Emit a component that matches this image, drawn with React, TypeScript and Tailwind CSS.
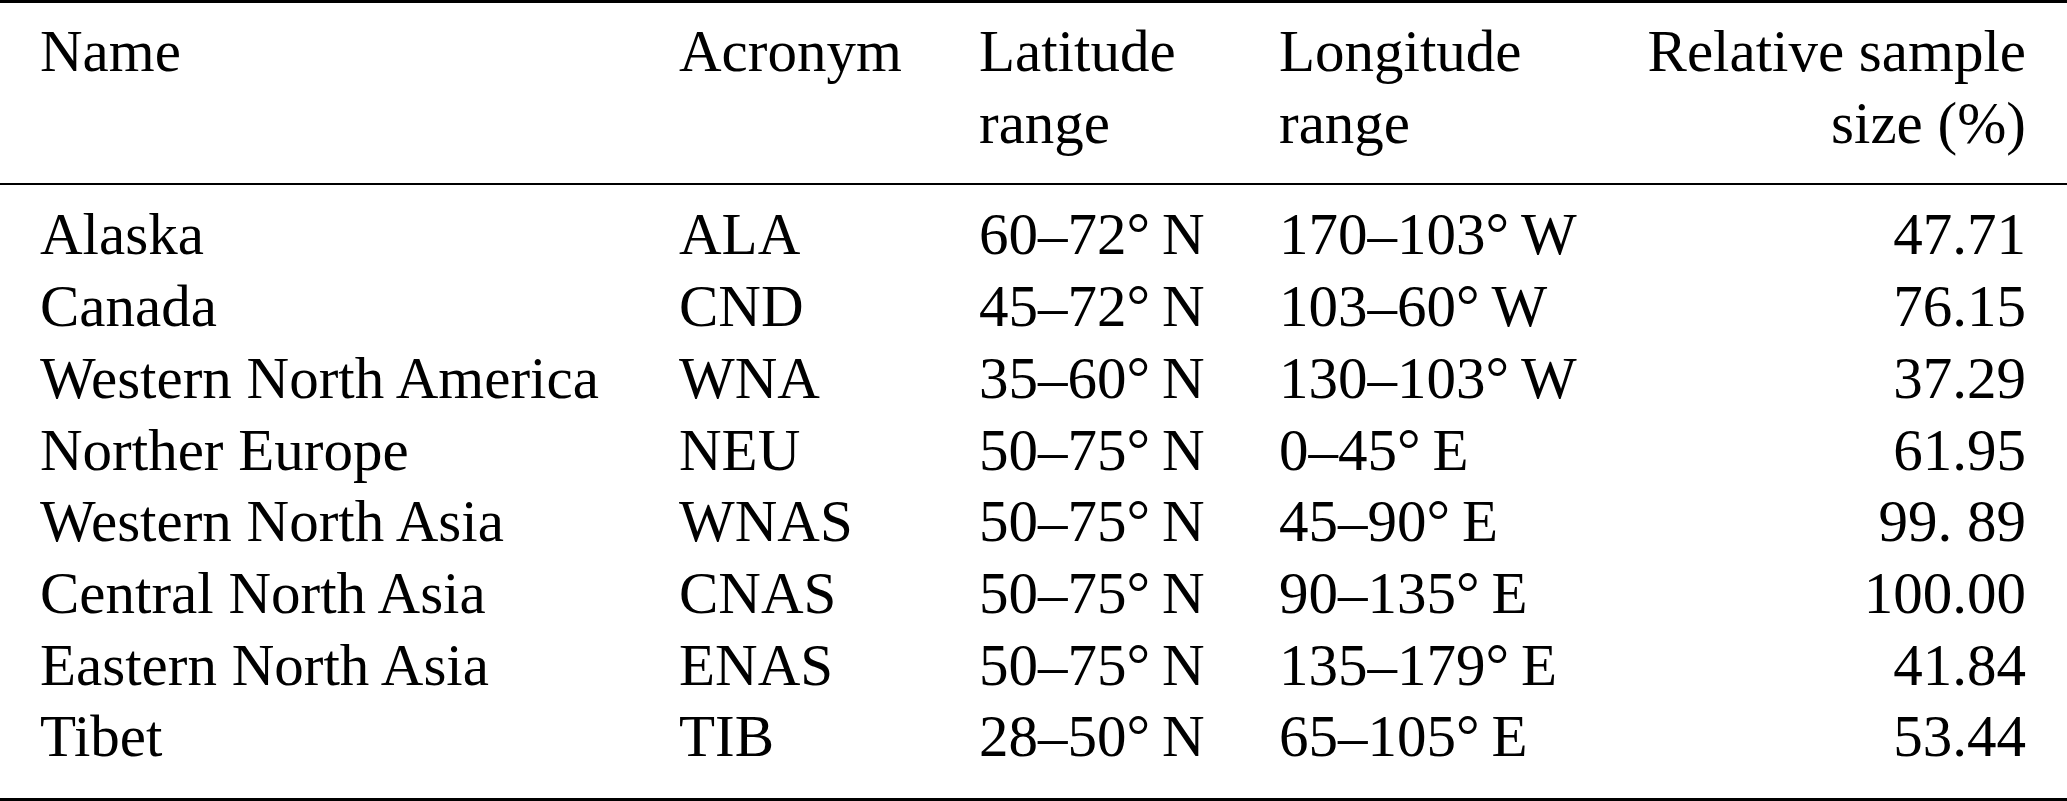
import React from "react";

type Row = [string, string, string, string, string];

const rows: Row[] = [
  ["Alaska", "ALA", "60–72°\u2009N", "170–103°\u2009W", "47.71"],
  ["Canada", "CND", "45–72°\u2009N", "103–60°\u2009W", "76.15"],
  ["Western North America", "WNA", "35–60°\u2009N", "130–103°\u2009W", "37.29"],
  ["Norther Europe", "NEU", "50–75°\u2009N", "0–45°\u2009E", "61.95"],
  ["Western North Asia", "WNAS", "50–75°\u2009N", "45–90°\u2009E", "99. 89"],
  ["Central North Asia", "CNAS", "50–75°\u2009N", "90–135°\u2009E", "100.00"],
  ["Eastern North Asia", "ENAS", "50–75°\u2009N", "135–179°\u2009E", "41.84"],
  ["Tibet", "TIB", "28–50°\u2009N", "65–105°\u2009E", "53.44"],
];

const grid = "grid grid-cols-[639px_300px_300px_1fr_400px] pl-[40px] pr-[41px]";

export default function App() {
  return (
    <div
      className="w-[2067px] h-[801px] bg-white text-black text-[59px] leading-[71.7px] overflow-hidden"
      style={{ fontFamily: '"Liberation Serif", "Times New Roman", serif' }}
    >
      <div className="border-t-[3px] border-b-[3px] border-black">
        <div className={`${grid} pt-[13px] pb-[24px] border-b-[2px] border-black`}>
          <div>Name</div>
          <div>Acronym</div>
          <div>
            Latitude
            <br />
            range
          </div>
          <div>
            Longitude
            <br />
            range
          </div>
          <div className="text-right">
            Relative sample
            <br />
            size (%)
          </div>
        </div>
        <div className="pt-[14px] pb-[25px]">
          {rows.map((r) => (
            <div key={r[0]} className={grid}>
              <div className="whitespace-nowrap">{r[0]}</div>
              <div>{r[1]}</div>
              <div className="whitespace-nowrap">{r[2]}</div>
              <div className="whitespace-nowrap">{r[3]}</div>
              <div className="text-right">{r[4]}</div>
            </div>
          ))}
        </div>
      </div>
    </div>
  );
}
